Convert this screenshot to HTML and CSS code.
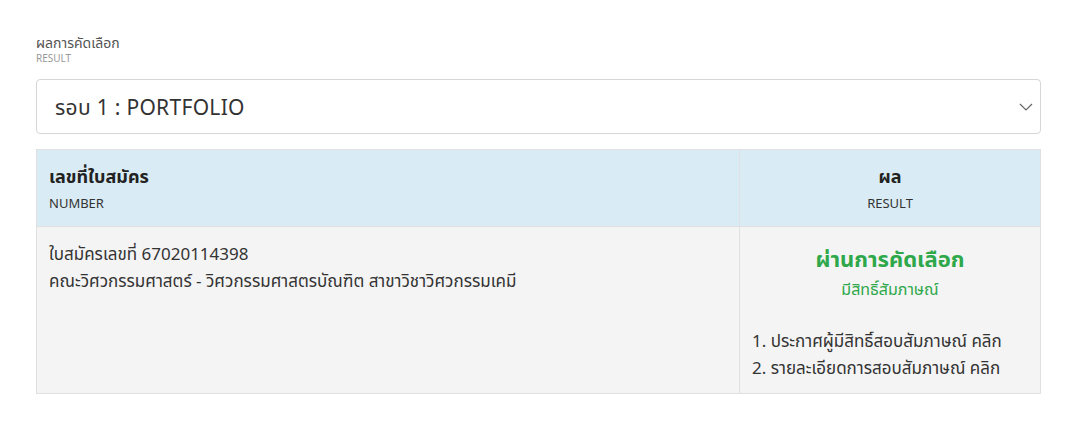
FILE: index.html
```html
<!DOCTYPE html>
<html lang="th">
<head>
    <meta charset="UTF-8">
    <meta name="viewport" content="width=device-width, initial-scale=1.0">
    <title>ผลการคัดเลือก</title>
    <link rel="stylesheet" href="styles.css">
</head>
<body>
    <div class="container">
        <div class="field-label">
            <div class="label-th">ผลการคัดเลือก</div>
            <div class="label-en">RESULT</div>
        </div>

        <div class="select-box">
            <span class="select-text">รอบ 1 : PORTFOLIO</span>
            <svg class="chevron" width="14" height="8" viewBox="0 0 14 8">
                <path d="M1 1 L7 7 L13 1" fill="none" stroke="#666" stroke-width="1.2"/>
            </svg>
        </div>

        <table class="result-table">
            <thead>
                <tr>
                    <th class="col-number">
                        <div class="th-title">เลขที่ใบสมัคร</div>
                        <div class="th-sub">NUMBER</div>
                    </th>
                    <th class="col-result">
                        <div class="th-title">ผล</div>
                        <div class="th-sub">RESULT</div>
                    </th>
                </tr>
            </thead>
            <tbody>
                <tr>
                    <td class="col-number">
                        <div>ใบสมัครเลขที่ 67020114398</div>
                        <div>คณะวิศวกรรมศาสตร์ - วิศวกรรมศาสตรบัณฑิต สาขาวิชาวิศวกรรมเคมี</div>
                    </td>
                    <td class="col-result">
                        <div class="pass">ผ่านการคัดเลือก</div>
                        <div class="pass-sub">มีสิทธิ์สัมภาษณ์</div>
                        <div class="links">
                            <div>1. ประกาศผู้มีสิทธิ์สอบสัมภาษณ์ คลิก</div>
                            <div>2. รายละเอียดการสอบสัมภาษณ์ คลิก</div>
                        </div>
                    </td>
                </tr>
            </tbody>
        </table>
    </div>
</body>
</html>
```

FILE: styles.css
```css
body {
    font-family: "Noto Sans", "Noto Sans Thai", sans-serif;
    color: #333;
    background: #fff;
    margin: 0;
}
.container {
    padding: 34px 30px 0 36px;
}
.field-label {
    margin-bottom: 15px;
}
.label-th {
    font-size: 14px;
    color: #555;
    line-height: 18px;
}
.label-en {
    font-size: 10px;
    color: #999;
    line-height: 12px;
}
.select-box {
    display: flex;
    align-items: center;
    justify-content: space-between;
    height: 53px;
    border: 1px solid #d6d6d6;
    border-radius: 4px;
    padding: 0 7px 0 18px;
    margin-bottom: 15px;
}
.select-text {
    font-size: 21px;
    color: #333;
    letter-spacing: 0.3px;
    padding-top: 3px;
}
.result-table {
    width: 100%;
    border-collapse: collapse;
    border: 1px solid #e0e0e0;
}
.result-table th,
.result-table td {
    border: 1px solid #e0e0e0;
    vertical-align: top;
}
.result-table th {
    background: #d9ecf5;
    font-weight: normal;
    padding: 13px 12px 9px;
}
.result-table td {
    background: #f4f4f4;
    font-size: 17px;
    line-height: 27px;
    padding: 13px 12px 12px;
    height: 141px;
}
.col-number {
    text-align: left;
}
.result-table th.col-result {
    width: 276px;
    text-align: center;
}
.th-title {
    font-size: 18px;
    font-weight: bold;
    line-height: 26px;
    color: #222;
}
.th-sub {
    font-size: 13px;
    color: #333;
    line-height: 28px;
}
.pass {
    text-align: center;
    font-size: 22px;
    font-weight: bold;
    color: #2ea84a;
    line-height: 36px;
}
.pass-sub {
    text-align: center;
    font-size: 16px;
    color: #2ea84a;
    line-height: 26px;
}
.links {
    margin-top: 25px;
}
```
